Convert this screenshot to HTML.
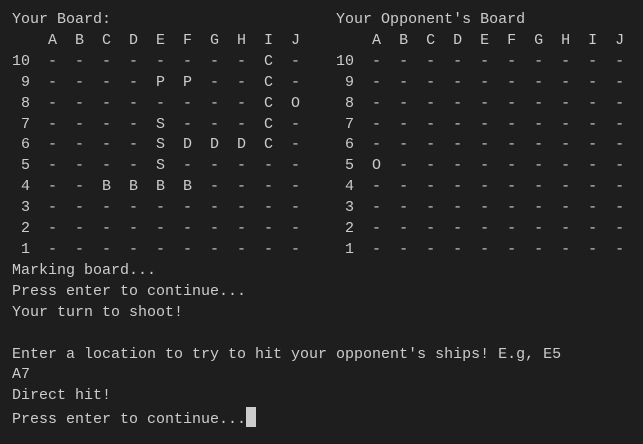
<!DOCTYPE html>
<html><head><meta charset="utf-8"><style>
html,body{margin:0;padding:0;background:#1e1e1e;width:643px;height:444px;overflow:hidden}
pre{margin:0;padding:10px 0 0 12px;font-family:"Liberation Mono",monospace;font-size:15px;line-height:20.9px;color:#cccccc;white-space:pre}
.cur{display:inline-block;width:10px;height:20px;background:#cccccc;vertical-align:-4px}
</style></head><body><pre>Your Board:                         Your Opponent's Board
    A  B  C  D  E  F  G  H  I  J        A  B  C  D  E  F  G  H  I  J
10  -  -  -  -  -  -  -  -  C  -    10  -  -  -  -  -  -  -  -  -  -
 9  -  -  -  -  P  P  -  -  C  -     9  -  -  -  -  -  -  -  -  -  -
 8  -  -  -  -  -  -  -  -  C  O     8  -  -  -  -  -  -  -  -  -  -
 7  -  -  -  -  S  -  -  -  C  -     7  -  -  -  -  -  -  -  -  -  -
 6  -  -  -  -  S  D  D  D  C  -     6  -  -  -  -  -  -  -  -  -  -
 5  -  -  -  -  S  -  -  -  -  -     5  O  -  -  -  -  -  -  -  -  -
 4  -  -  B  B  B  B  -  -  -  -     4  -  -  -  -  -  -  -  -  -  -
 3  -  -  -  -  -  -  -  -  -  -     3  -  -  -  -  -  -  -  -  -  -
 2  -  -  -  -  -  -  -  -  -  -     2  -  -  -  -  -  -  -  -  -  -
 1  -  -  -  -  -  -  -  -  -  -     1  -  -  -  -  -  -  -  -  -  -
Marking board...
Press enter to continue...
Your turn to shoot!

Enter a location to try to hit your opponent's ships! E.g, E5
A7
Direct hit!
Press enter to continue...<span class="cur"></span></pre></body></html>
